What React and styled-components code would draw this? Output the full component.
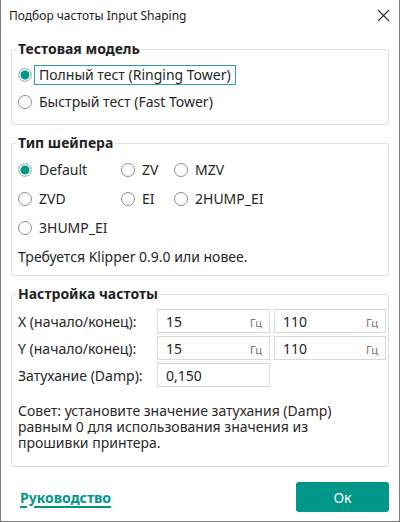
import React from "react";
import styled, { createGlobalStyle } from "styled-components";

const TEAL = "#009688";

const GlobalStyle = createGlobalStyle`
  html, body {
    margin: 0;
    padding: 0;
    background: #ffffff;
  }
  * {
    box-sizing: border-box;
  }
`;

const Window = styled.div`
  width: 400px;
  height: 522px;
  border: 1px solid #7d7d7d;
  border-top: none;
  background: #fff;
  display: flex;
  flex-direction: column;
  font-family: "Noto Sans", "Open Sans", sans-serif;
  color: #262626;
`;

const TitleBar = styled.div`
  height: 30px;
  display: flex;
  align-items: center;
  justify-content: space-between;
  padding: 0 9px 0 8px;
  font-size: 12px;
  color: #1a1a1a;
`;

const CloseButton = styled.div`
  width: 14px;
  height: 14px;
  display: flex;
  align-items: center;
  justify-content: center;
`;

const Content = styled.div`
  padding: 10px 10px 0;
  display: flex;
  flex-direction: column;
  gap: 9px;
`;

const Group = styled.fieldset`
  margin: 0;
  border: 1px solid #dedede;
  border-radius: 3px;
  padding: ${(p) => p.$pad || "4px 8px 8px 8px"};
  min-width: 0;
`;

const Legend = styled.legend`
  padding: 0 2px;
  margin-left: -2px;
  font-size: 14px;
  font-weight: 700;
  line-height: 18px;
  color: #1f1f1f;
`;

const RadioList = styled.div`
  display: flex;
  flex-direction: column;
`;

const RadioGrid = styled.div`
  display: grid;
  grid-template-columns: 103px 53px auto;
  grid-auto-rows: 29px;
`;

const RadioRow = styled.label`
  display: flex;
  align-items: center;
  height: ${(p) => p.$h || 27}px;
  font-size: 14px;
`;

const Circle = styled.span`
  width: 14px;
  height: 14px;
  border-radius: 50%;
  flex-shrink: 0;
  border: 1px solid ${(p) => (p.$checked ? "#c4c4c4" : "#8f8f8f")};
  background: ${(p) => (p.$checked ? TEAL : "#fff")};
  box-shadow: ${(p) => (p.$checked ? "inset 0 0 0 1.5px #fff" : "none")};
`;

const RadioText = styled.span`
  margin-left: 2px;
  padding: 0 4px;
  line-height: 18px;
  border: 1px solid ${(p) => (p.$focus ? "#2aa597" : "transparent")};
  white-space: nowrap;
`;

const Note = styled.div`
  font-size: 14px;
  line-height: 18px;
  margin-top: 6px;
`;

const FreqGrid = styled.div`
  display: grid;
  grid-template-columns: 135px 113px 112px;
  grid-auto-rows: 24px;
  row-gap: 3px;
  column-gap: 4px;
  align-items: center;
`;

const FieldLabel = styled.span`
  font-size: 14px;
  white-space: nowrap;
`;

const Input = styled.div`
  height: 24px;
  border: 1px solid #d9d9d9;
  display: flex;
  align-items: center;
  justify-content: space-between;
  padding: 0 7px 0 8px;
  font-size: 14px;
  color: #1f1f1f;
`;

const Unit = styled.span`
  font-size: 11px;
  color: #8e6c62;
  padding-top: 3px;
`;

const Tip = styled.p`
  margin: 16px 0 0;
  font-size: 14px;
  line-height: 16px;
  color: #2a2a2a;
`;

const Footer = styled.div`
  display: flex;
  align-items: center;
  justify-content: space-between;
  padding: 15px 10px 0 19px;
`;

const Link = styled.a`
  font-size: 14px;
  font-weight: 700;
  color: ${TEAL};
  text-decoration: underline;
  text-decoration-thickness: 2px;
  text-underline-offset: 3px;
`;

const OkButton = styled.button`
  width: 93px;
  height: 30px;
  border: none;
  border-radius: 3px;
  background: ${TEAL};
  color: #fff;
  font-family: inherit;
  font-size: 14px;
`;

function Radio({ label, checked, focus, h }) {
  return (
    <RadioRow $h={h}>
      <Circle $checked={checked} />
      <RadioText $focus={focus}>{label}</RadioText>
    </RadioRow>
  );
}

function Field({ value, unit }) {
  return (
    <Input>
      <span>{value}</span>
      {unit && <Unit>{unit}</Unit>}
    </Input>
  );
}

const shapers = ["Default", "ZV", "MZV", "ZVD", "EI", "2HUMP_EI", "3HUMP_EI"];

export default function App() {
  return (
    <>
      <GlobalStyle />
      <Window>
        <TitleBar>
          <span>Подбор частоты Input Shaping</span>
          <CloseButton>
            <svg width="13" height="13" viewBox="0 0 13 13">
              <path d="M1 1L12 12M12 1L1 12" stroke="#2b2b2b" strokeWidth="1.1" />
            </svg>
          </CloseButton>
        </TitleBar>
        <Content>
          <Group $pad="3px 6px 9px 6px">
            <Legend>Тестовая модель</Legend>
            <RadioList>
              <Radio label="Полный тест (Ringing Tower)" checked focus />
              <Radio label="Быстрый тест (Fast Tower)" />
            </RadioList>
          </Group>

          <Group $pad="3px 6px 9px 6px">
            <Legend>Тип шейпера</Legend>
            <RadioGrid>
              {shapers.map((s, i) => (
                <Radio key={s} label={s} checked={i === 0} h={29} />
              ))}
            </RadioGrid>
            <Note>Требуется Klipper 0.9.0 или новее.</Note>
          </Group>

          <Group $pad="6px 6px 15px 6px">
            <Legend>Настройка частоты</Legend>
            <FreqGrid>
              <FieldLabel>X (начало/конец):</FieldLabel>
              <Field value="15" unit="Гц" />
              <Field value="110" unit="Гц" />
              <FieldLabel>Y (начало/конец):</FieldLabel>
              <Field value="15" unit="Гц" />
              <Field value="110" unit="Гц" />
              <FieldLabel>Затухание (Damp):</FieldLabel>
              <Field value="0,150" />
            </FreqGrid>
            <Tip>
              Совет: установите значение затухания (Damp)
              <br />
              равным 0 для использования значения из
              <br />
              прошивки принтера.
            </Tip>
          </Group>
        </Content>
        <Footer>
          <Link>Руководство</Link>
          <OkButton>Ок</OkButton>
        </Footer>
      </Window>
    </>
  );
}
